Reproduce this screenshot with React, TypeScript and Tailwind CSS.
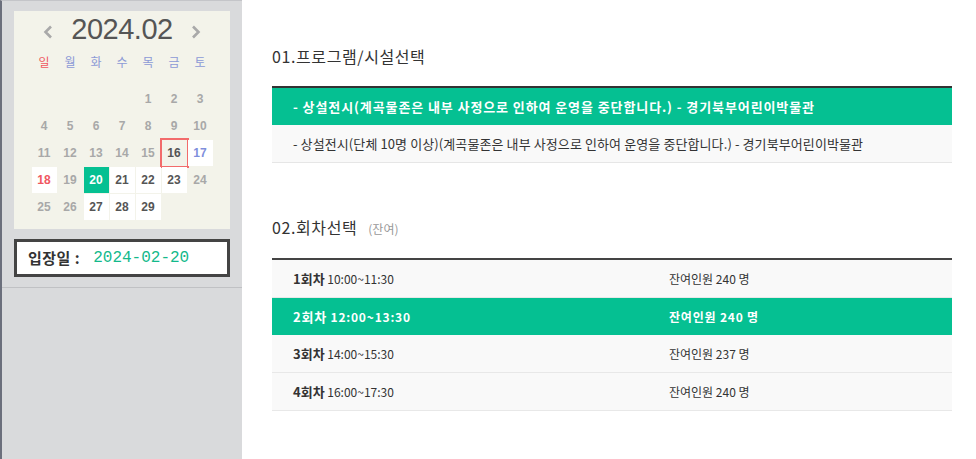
const weekdays = ['일', '월', '화', '수', '목', '금', '토'];

type Day = {
  n: number;
  kind: 'off' | 'open' | 'sun' | 'sat' | 'selected' | 'today';
};

const days: (Day | null)[] = [
  null, null, null, null,
  { n: 1, kind: 'off' }, { n: 2, kind: 'off' }, { n: 3, kind: 'off' },
  { n: 4, kind: 'off' }, { n: 5, kind: 'off' }, { n: 6, kind: 'off' }, { n: 7, kind: 'off' },
  { n: 8, kind: 'off' }, { n: 9, kind: 'off' }, { n: 10, kind: 'off' },
  { n: 11, kind: 'off' }, { n: 12, kind: 'off' }, { n: 13, kind: 'off' }, { n: 14, kind: 'off' },
  { n: 15, kind: 'off' }, { n: 16, kind: 'today' }, { n: 17, kind: 'sat' },
  { n: 18, kind: 'sun' }, { n: 19, kind: 'off' }, { n: 20, kind: 'selected' }, { n: 21, kind: 'open' },
  { n: 22, kind: 'open' }, { n: 23, kind: 'open' }, { n: 24, kind: 'off' },
  { n: 25, kind: 'off' }, { n: 26, kind: 'off' }, { n: 27, kind: 'open' }, { n: 28, kind: 'open' },
  { n: 29, kind: 'open' },
];

const dayClass: Record<Day['kind'], string> = {
  off: 'text-[#a8a8a8]',
  open: 'bg-white text-[#555]',
  sun: 'bg-white text-[#f0575f]',
  sat: 'bg-white text-[#7f8fdc]',
  selected: 'bg-[#05c092] text-white',
  today: 'text-[#555] outline-2 outline-[#f26b6b]',
};

const sessions = [
  { no: '1회차', time: '10:00~11:30', left: 240, active: false },
  { no: '2회차', time: '12:00~13:30', left: 240, active: true },
  { no: '3회차', time: '14:00~15:30', left: 237, active: false },
  { no: '4회차', time: '16:00~17:30', left: 240, active: false },
];

const kr = { fontFamily: '"Noto Sans CJK KR", "Noto Sans", sans-serif' };

function Chevron({ dir }: { dir: 'left' | 'right' }) {
  return (
    <svg width="10" height="14" viewBox="0 0 10 14" className="mt-[6px]">
      <polyline
        points={dir === 'left' ? '8,1.5 2.5,7 8,12.5' : '2,1.5 7.5,7 2,12.5'}
        fill="none"
        stroke="#a9a9a9"
        strokeWidth="2.6"
      />
    </svg>
  );
}

function Calendar() {
  return (
    <div className="w-[216px] h-[218px] bg-[#f3f3ea]">
      {/* 년월 */}
      <div className="h-[36px] flex items-center justify-center gap-[18px]">
        <Chevron dir="left" />
        <span
          className="text-[29px] leading-none text-[#555] tracking-[-0.5px]"
          style={{ fontFamily: '"Liberation Sans", Arial, sans-serif' }}
        >
          2024.02
        </span>
        <Chevron dir="right" />
      </div>

      {/* 요일 */}
      <div className="mt-[5px] grid grid-cols-[repeat(7,25px)] gap-x-px justify-center h-[20px] items-center text-[12px]" style={kr}>
        {weekdays.map((w, i) => (
          <div key={w} className={`text-center ${i === 0 ? 'text-[#f0575f]' : 'text-[#8c9ad6]'}`}>
            {w}
          </div>
        ))}
      </div>

      {/* 날짜 */}
      <div
        className="mt-[14px] grid grid-cols-[repeat(7,25px)] grid-rows-[repeat(5,26px)] gap-px justify-center text-[12px] font-bold"
        style={{ fontFamily: '"Liberation Sans", Arial, sans-serif' }}
      >
        {days.map((d, i) =>
          d ? (
            <div key={i} className={`flex items-center justify-center ${dayClass[d.kind]}`}>
              {d.n}
            </div>
          ) : (
            <div key={i} />
          )
        )}
      </div>
    </div>
  );
}

export default function App() {
  return (
    <div className="flex w-full h-[459px] overflow-hidden bg-white">
      {/* 좌측: 달력 */}
      <aside className="w-[242px] shrink-0 bg-[#d9dadc] border-l-2 border-[#6b6f7c] border-t border-t-[#c4c5c9] flex flex-col">
        <div className="pt-[10px] px-[12px] pb-[10px]">
          <Calendar />
          <div className="mt-[10px] h-[38px] border-[3px] border-[#444] bg-white flex items-center pl-[11px]">
            <span className="text-[15px] font-bold text-[#333] tracking-[0.5px]" style={kr}>
              입장일 :
            </span>
            <span
              className="ml-[13px] text-[16px] text-[#13b98b]"
              style={{ fontFamily: '"Liberation Mono", "Courier New", monospace' }}
            >
              2024-02-20
            </span>
          </div>
        </div>
        <div className="border-t border-[#c0c1c4]" />
      </aside>

      {/* 우측: 선택 영역 */}
      <main className="flex-1 pl-[30px] pr-[24px] pt-[46px] text-[#333]" style={kr}>
        <h2 className="text-[16px] leading-[20px] tracking-[0.6px] text-[#333]">01.프로그램/시설선택</h2>
        <div className="mt-[20px] border-t-2 border-[#333]">
          <div className="h-[37px] flex items-center pl-[21px] bg-[#05c092] text-white text-[13px] font-bold tracking-[0.9px]">
            - 상설전시(계곡물존은 내부 사정으로 인하여 운영을 중단합니다.) - 경기북부어린이박물관
          </div>
          <div className="h-[38px] flex items-center pl-[21px] bg-[#f9f9f9] border-b border-[#e6e6e6] text-[13px] text-[#333] tracking-[0.1px]">
            - 상설전시(단체 10명 이상)(계곡물존은 내부 사정으로 인하여 운영을 중단합니다.) - 경기북부어린이박물관
          </div>
        </div>

        <h2 className="mt-[54px] text-[16px] leading-[20px] text-[#333] flex items-baseline">
          <span className="tracking-[0.6px]">02.회차선택</span>
          <span className="ml-[11px] text-[12px] text-[#999]">(잔여)</span>
        </h2>
        <div className="mt-[19px] border-t-2 border-[#444]">
          {sessions.map((s) =>
            s.active ? (
              <div key={s.no} className="h-[37px] grid grid-cols-[376px_1fr] items-center bg-[#05c092] text-white text-[12px] font-bold tracking-[0.8px]">
                <div className="pl-[21px]">
                  <span className="text-[13px]">{s.no}</span> {s.time}
                </div>
                <div className="pl-[21px]">잔여인원 {s.left} 명</div>
              </div>
            ) : (
              <div key={s.no} className="h-[38px] grid grid-cols-[376px_1fr] items-center bg-[#f9f9f9] border-b border-[#e8e8e8] text-[12px] text-[#333]">
                <div className="pl-[21px]">
                  <span className="text-[13px] font-bold">{s.no}</span> {s.time}
                </div>
                <div className="pl-[21px]">잔여인원 {s.left} 명</div>
              </div>
            )
          )}
        </div>
      </main>
    </div>
  );
}
